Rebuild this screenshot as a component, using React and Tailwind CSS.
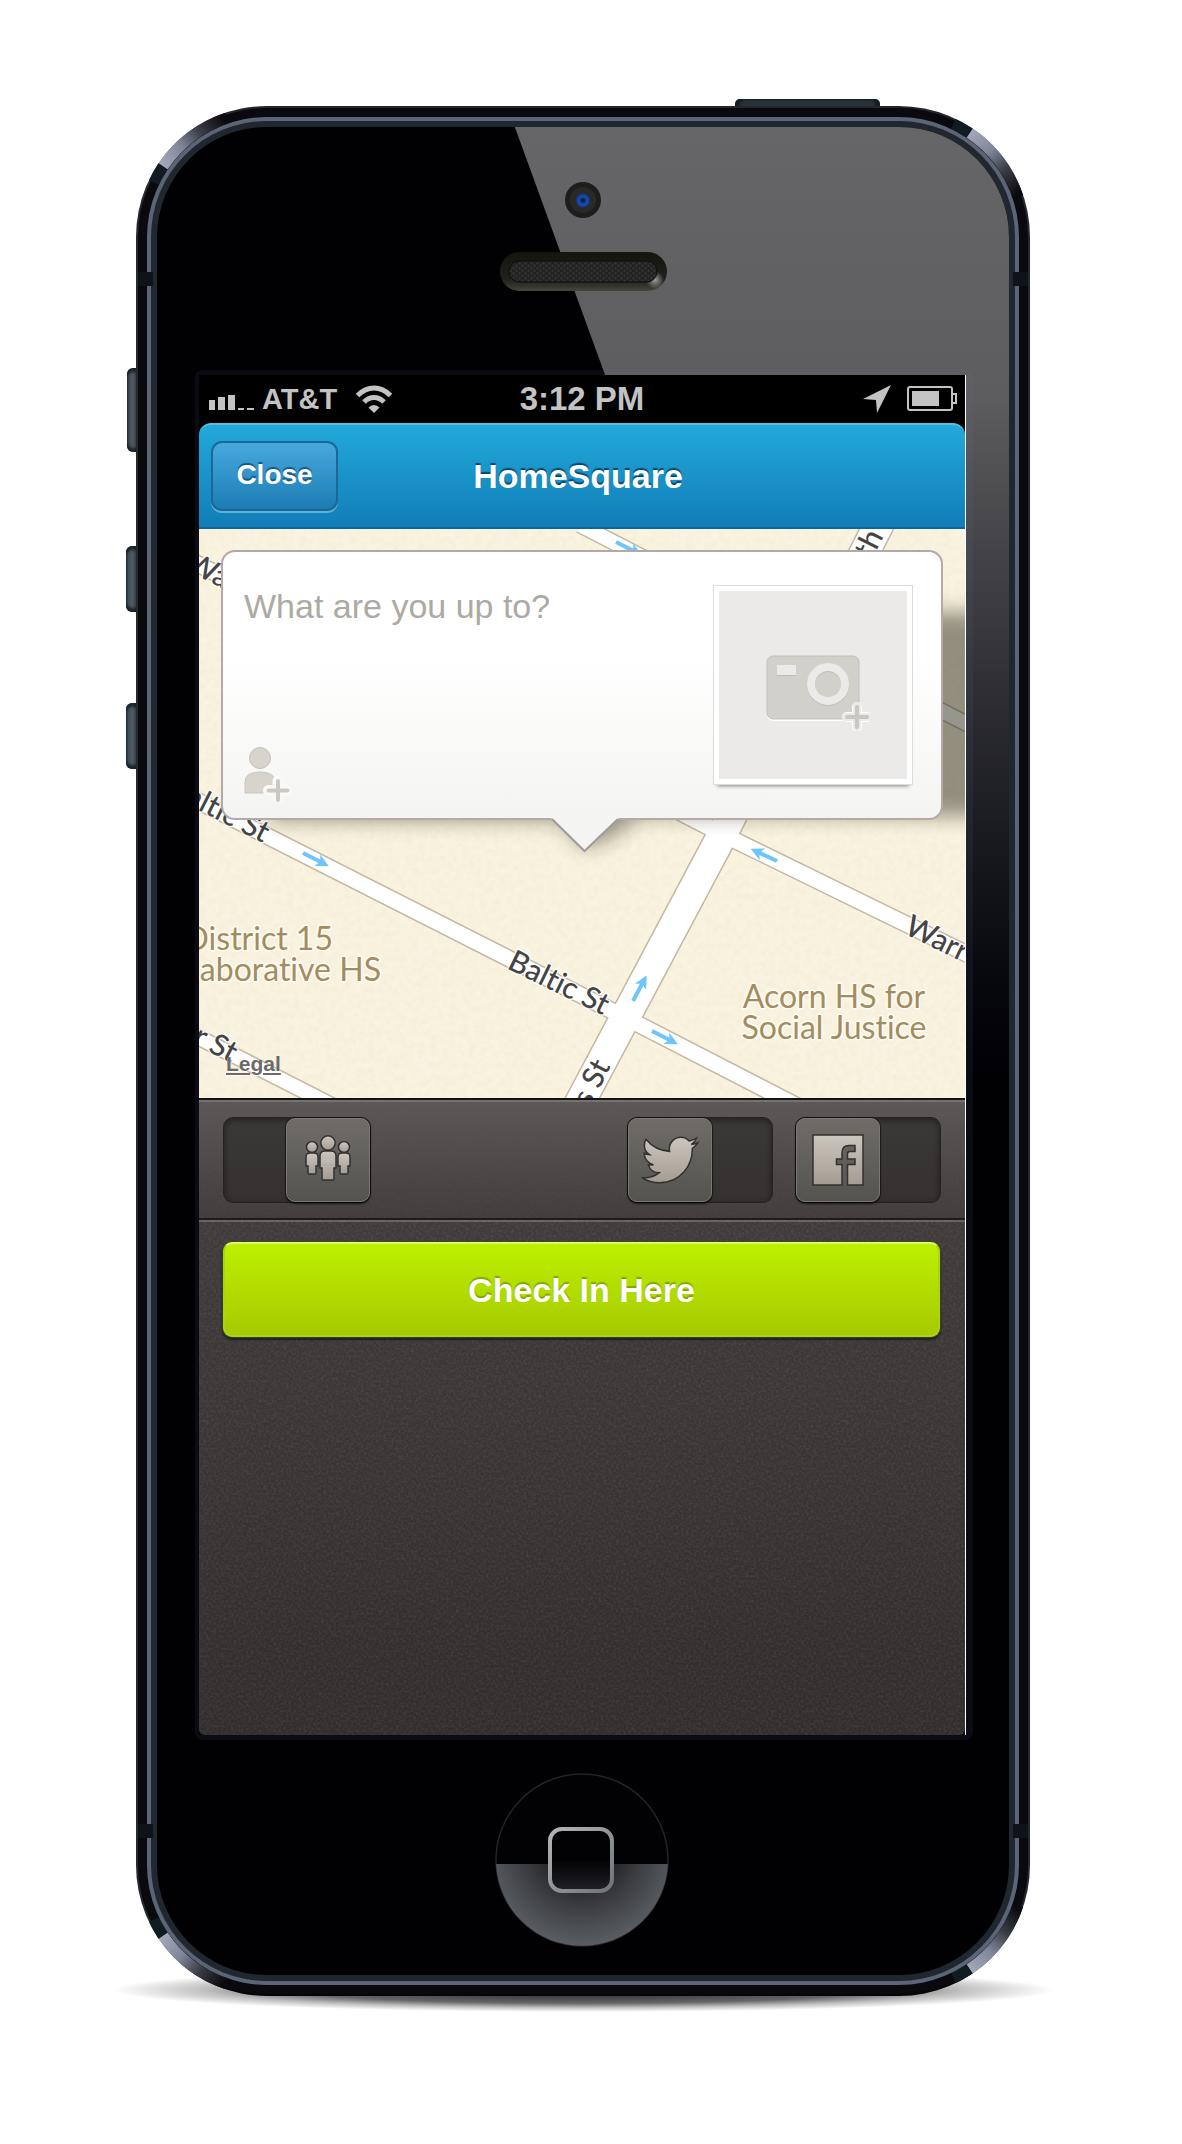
import React from "react";
import { FaTwitter } from "react-icons/fa";

const LABEL = "fill-[#444444] font-['Lato','Noto_Sans',sans-serif] text-[30px] font-medium [font-variant-ligatures:none]";
const PLACE = "fill-[#a38d5c] font-['Lato','Noto_Sans',sans-serif] text-[32px] [font-variant-ligatures:none]";

const ROADS = [
  { d: "M190 560L722 834L906 924L975 958", w: 15 },
  { d: "M190 797L636 1023L805 1110", w: 15 },
  { d: "M580 525L975 728", w: 14 },
  { d: "M190 1033L345 1112", w: 14 },
  { d: "M576 1110L719 841L882 518", w: 29 },
];

const ARROWS = [
  { x: 303, y: 853, a: 27 },
  { x: 777, y: 861, a: 205 },
  { x: 633, y: 1001, a: -62 },
  { x: 652, y: 1031, a: 27 },
  { x: 616, y: 542, a: 27 },
];

function StreetMap() {
  return (
    <svg
      className="absolute inset-0 h-full w-full"
      viewBox="199 529 766 569"
      preserveAspectRatio="xMidYMid slice"
      aria-label="Street map"
    >
      <defs>
        <filter id="paper" x="0" y="0" width="100%" height="100%">
          <feTurbulence type="fractalNoise" baseFrequency="0.16" numOctaves="3" seed="4" />
          <feColorMatrix values="0 0 0 0 0.82  0 0 0 0 0.72  0 0 0 0 0.48  0.45 0 0 0 -0.16" />
        </filter>
        <filter id="soft" x="-20%" y="-40%" width="140%" height="180%">
          <feGaussianBlur stdDeviation="10" />
        </filter>
      </defs>
      <rect x="199" y="529" width="766" height="569" fill="#f9f3e1" />
      <rect x="199" y="529" width="766" height="569" filter="url(#paper)" />
      <g fill="none" stroke="#c3b8a2">
        {ROADS.map((r) => (
          <path key={r.d} d={r.d} strokeWidth={r.w + 3} />
        ))}
      </g>
      <g fill="none" stroke="#ffffff">
        {ROADS.map((r) => (
          <path key={r.d} d={r.d} strokeWidth={r.w} />
        ))}
      </g>
      {ARROWS.map((a) => (
        <g key={`${a.x}-${a.y}`} transform={`translate(${a.x} ${a.y}) rotate(${a.a})`}>
          <path d="M0 0H21" stroke="#6fc4fb" strokeWidth="4" />
          <path d="M29 0L16 -6.5L19.5 0L16 6.5Z" fill="#6fc4fb" />
        </g>
      ))}
      <g stroke="#ffffff" strokeWidth="3" paintOrder="stroke" strokeLinejoin="round" strokeOpacity="0.8">
        <text className={LABEL} transform="translate(184 569) rotate(27)">Warren St</text>
        <text className={LABEL} transform="translate(263 843) rotate(27)" textAnchor="end">Baltic St</text>
        <text className={LABEL} transform="translate(506 968) rotate(26)">Baltic St</text>
        <text className={LABEL} transform="translate(903 933) rotate(26)">Warren St</text>
        <text className={LABEL} transform="translate(231 1063) rotate(27)" textAnchor="end">Butler St</text>
        <text className={LABEL} transform="translate(635 573) rotate(27)">Wyckoff St</text>
        <text className={LABEL} transform="translate(611 1066) rotate(-63)" textAnchor="end">Nevins St</text>
        <text className={LABEL} transform="translate(884 536) rotate(-63)" textAnchor="end">th</text>
        <text className={PLACE} x="333" y="950" textAnchor="end">District 15</text>
        <text className={PLACE} x="381" y="981" textAnchor="end">Collaborative HS</text>
        <text className={PLACE} x="834" y="1008" textAnchor="middle">Acorn HS for</text>
        <text className={PLACE} x="834" y="1039" textAnchor="middle">Social Justice</text>
      </g>
      <path d="M270 612H1000V816H640L610 838L584 848L560 820H270Z" fill="#1e1c10" opacity="0.46" filter="url(#soft)" />
    </svg>
  );
}

function PersonPlus() {
  return (
    <svg width="48" height="56" viewBox="0 0 48 56" aria-hidden="true">
      <circle cx="16" cy="12" r="10.5" fill="#d6d4cd" stroke="#c4c2ba" />
      <path d="M1 47V36Q1 26 16 26Q31 26 31 36V47Z" fill="#d6d4cd" stroke="#c9c7bf" />
      <path d="M34 35V54M24.500 44.500H43.500" stroke="#f9f9f7" strokeWidth="11" strokeLinecap="round" />
      <path d="M34 35V54M24.500 44.500H43.500" stroke="#cbc9c1" strokeWidth="4" strokeLinecap="round" />
    </svg>
  );
}

function CameraPlus() {
  return (
    <svg width="104" height="76" viewBox="0 0 104 76" aria-hidden="true">
      <rect x="1" y="2" width="92" height="64" rx="6" fill="#ffffff" />
      <rect x="1" y="1" width="92" height="63" rx="6" fill="#d1d0ca" stroke="#c2c1ba" />
      <rect x="11" y="10" width="19" height="11" fill="#bdbcb5" />
      <rect x="11" y="10" width="19" height="10" fill="#ebeae8" />
      <circle cx="62" cy="30" r="17" fill="none" stroke="#bfbeb7" strokeWidth="8" />
      <circle cx="62" cy="29" r="17" fill="none" stroke="#ebeae8" strokeWidth="8" />
      <path d="M91 52V72M81 62H101" stroke="#ffffff" strokeWidth="10" strokeLinecap="round" />
      <path d="M91 51V72M80 62H102" stroke="#ebeae8" strokeWidth="8" strokeLinecap="round" />
      <path d="M91 52V72M81 62H101" stroke="#c8c7c0" strokeWidth="4" strokeLinecap="round" />
    </svg>
  );
}

function IconFill() {
  return (
    <defs>
      <linearGradient id="stone" x1="0" y1="0" x2="0" y2="1">
        <stop offset="0" stopColor="#cbc6be" />
        <stop offset="1" stopColor="#a49c92" />
      </linearGradient>
    </defs>
  );
}

function PeopleIcon() {
  const side = "M2 22Q2 18 6 18H10Q14 18 14 22V31H12V38Q12 39 11 39H5Q4 39 4 38V31H2Z";
  return (
    <svg width="50" height="50" viewBox="-1 0 50 50" aria-hidden="true">
      <IconFill />
      <g fill="url(#stone)" stroke="#33312f" strokeWidth="1.500">
        <circle cx="8" cy="12" r="5.500" />
        <path d={side} />
        <circle cx="40" cy="12" r="5.500" />
        <path d={side} transform="translate(32 0)" />
        <circle cx="24" cy="8" r="7.200" />
        <path d="M16 21Q16 16 21 16H27Q32 16 32 21V33H30V44Q30 45 29 45H19Q18 45 18 44V33H16Z" />
      </g>
    </svg>
  );
}

function FacebookSquare() {
  return (
    <svg width="54" height="54" viewBox="-2 -2 54 54" aria-hidden="true">
      <path
        d="M0 0H50V50H34.500V29.500H42V24H34.500V19Q34.500 16.500 37 16.500H42V10.500H36Q29 10.500 29 18V24H23.500V29.500H29V50H0Z"
        fill="url(#stone)"
        stroke="#33312f"
        strokeWidth="1.500"
      />
    </svg>
  );
}

function Toggle({ id, label, right, children }) {
  return (
    <label
      htmlFor={id}
      className={`flex h-[86px] rounded-[10px] border border-[#242221] bg-linear-to-b from-[#3b3937] to-[#343130] shadow-[inset_0_2px_6px_rgba(0,0,0,0.45)] ${right ? "w-[148px] justify-end" : "w-[146px] justify-start"}`}
    >
      <input id={id} type="checkbox" defaultChecked={right} aria-label={label} className="sr-only" />
      <span className="flex h-[84px] w-[84px] items-center justify-center rounded-[9px] border border-[#7b7873] bg-linear-to-b from-[#706d69] to-[#54534e] shadow-[0_2px_2px_rgba(0,0,0,0.6),0_0_1px_1px_rgba(0,0,0,0.45)]">
        {children}
      </span>
    </label>
  );
}

function StatusBar() {
  return (
    <div className="grid h-12 grid-cols-3 items-center bg-black font-['Liberation_Sans',Arial,sans-serif] font-bold text-[#c3c3c3]">
      <div className="flex items-center gap-2 pl-[10px] text-[29px] leading-8">
        <svg width="45" height="26" viewBox="0 0 45 26" fill="#c3c3c3" aria-hidden="true">
          <path d="M0 14H6V24H0ZM9 11H16V24H9ZM19 9H26V24H19ZM29 22H35V24H29ZM38 22H45V24H38Z" />
        </svg>
        <span>AT&amp;T</span>
        <svg className="ml-[10px]" width="38" height="28" viewBox="0 0 38 28" aria-hidden="true">
          <g fill="none" stroke="#c3c3c3" strokeWidth="5">
            <path d="M2.500 10.500Q10 3 19 3T35.500 10.500" />
            <path d="M9 17Q13.500 12.500 19 12.500T29 17" />
          </g>
          <path d="M19 28L13.500 22.500Q16 20 19 20T24.500 22.500Z" fill="#c3c3c3" />
        </svg>
      </div>
      <span className="text-center text-[33px] leading-8">3:12 PM</span>
      <div className="flex items-center justify-end gap-4 pr-2">
        <svg width="28" height="28" viewBox="0 0 28 28" fill="#c3c3c3" aria-hidden="true">
          <path d="M28 0L14 28L13 15L0 14Z" />
        </svg>
        <svg width="50" height="26" viewBox="0 0 50 26" aria-hidden="true">
          <rect x="1" y="1" width="44" height="23" rx="2" fill="none" stroke="#c3c3c3" strokeWidth="2" />
          <path d="M46 8H49V17H46" fill="none" stroke="#c3c3c3" strokeWidth="2" />
          <rect x="5" y="5" width="27" height="15" fill="#c3c3c3" />
        </svg>
      </div>
    </div>
  );
}

function Header() {
  return (
    <div className="bg-black font-['Liberation_Sans',Arial,sans-serif] font-bold text-white">
      <header className="grid h-[106px] grid-cols-[1fr_auto_1fr] items-center rounded-t-[12px] border-t-2 border-b-2 border-t-[#58bfe3] border-b-[#0a64a0] bg-linear-to-b from-[#22a9d9] to-[#127db8] pr-5 pl-3">
        <button
          type="button"
          className="h-[70px] w-[127px] justify-self-start rounded-[11px] border-2 border-[#1c6797] bg-linear-to-b from-[#46a9dc] to-[#1b7db4] pb-[2px] text-[28px] leading-8 shadow-[0_2px_0_rgba(130,195,230,0.7)] [text-shadow:0_-2px_1px_rgba(10,70,110,0.8)]"
        >
          Close
        </button>
        <h1 className="text-[34px] leading-10 [text-shadow:0_-2px_1px_rgba(5,60,90,0.85)]">HomeSquare</h1>
      </header>
    </div>
  );
}

function Composer() {
  return (
    <div className="relative mx-[22px] mt-[21px]">
      <div className="flex h-[270px] justify-between rounded-[14px] border-2 border-[#b5a8a8] bg-linear-to-b from-white from-40% to-[#f4f4f2] pt-[34px] pr-[29px] pl-[21px]">
        <div className="flex min-w-0 flex-1 flex-col">
          <textarea
            aria-label="What are you up to?"
            placeholder="What are you up to?"
            className="h-40 w-full resize-none bg-transparent font-['Liberation_Sans',Arial,sans-serif] text-[34px] leading-10 outline-none placeholder:text-[#abaaa3]"
          />
          <button type="button" aria-label="Tag a friend" className="self-start">
            <PersonPlus />
          </button>
        </div>
        <button
          type="button"
          aria-label="Add a photo"
          className="flex h-[198px] w-[198px] items-center justify-center border-[5px] border-white bg-[#ebeae8] pt-4 pl-[10px] shadow-[0_0_0_1px_#dddcd9,0_5px_4px_-3px_rgba(0,0,0,0.45)]"
        >
          <CameraPlus />
        </button>
      </div>
      <svg
        className="absolute top-[268px] left-[330px]"
        width="68"
        height="36"
        viewBox="0 0 68 36"
        aria-hidden="true"
      >
        <path d="M0 0H68L34 33Z" fill="#f4f4f2" />
        <path d="M1 1L33.500 33L67 1" fill="none" stroke="#a59a9a" strokeWidth="2" />
      </svg>
    </div>
  );
}

function Grain() {
  return (
    <svg className="pointer-events-none absolute inset-0 h-full w-full" aria-hidden="true">
      <filter id="grain" x="0" y="0" width="100%" height="100%">
        <feTurbulence type="fractalNoise" baseFrequency="0.4" numOctaves="2" seed="7" />
        <feColorMatrix values="0 0 0 0 1  0 0 0 0 0.95  0 0 0 0 0.9  0.16 0 0 0 -0.06" />
      </filter>
      <rect width="100%" height="100%" filter="url(#grain)" />
    </svg>
  );
}

function Screen() {
  return (
    <div className="flex flex-col border-r border-white bg-black">
      <StatusBar />
      <Header />
      <section className="relative h-[569px] overflow-hidden">
        <StreetMap />
        <Composer />
        <a
          href="#legal"
          className="absolute bottom-[22px] left-[27px] font-['Liberation_Sans',Arial,sans-serif] text-[21px] leading-6 font-bold text-[#6b6a66] underline underline-offset-2 [text-shadow:0_1px_1px_white]"
        >
          Legal
        </a>
      </section>
      <div className="relative rounded-b-[6px] bg-linear-to-b from-[#443f3f] to-[#312d2c]">
        <Grain />
        <div className="relative flex h-[122px] items-start border-t-2 border-b-2 border-t-[#141313] border-b-[#1d1b1b] bg-linear-to-b from-[#5f5b5a]/90 to-[#433d3d]/70 px-6 pt-[17px] shadow-[inset_0_2px_0_rgba(255,255,255,0.16),0_2px_0_rgba(255,255,255,0.2)]">
          <div className="flex-1">
            <Toggle id="friends" label="Share with friends" right>
              <PeopleIcon />
            </Toggle>
          </div>
          <div className="flex gap-[22px]">
            <Toggle id="twitter" label="Share on Twitter">
              <FaTwitter className="h-14 w-14 overflow-visible fill-[url(#stone)] stroke-[#33312f] [stroke-width:14px]" aria-hidden="true" />
            </Toggle>
            <Toggle id="facebook" label="Share on Facebook">
              <FacebookSquare />
            </Toggle>
          </div>
        </div>
        <div className="relative h-[515px] pt-[22px] pr-[25px] pl-6">
          <button
            type="button"
            className="h-[95px] w-full rounded-[9px] border-2 border-[#a9d31a] border-t-[#dcf57a] bg-linear-to-b from-[#bdf000] to-[#a7ca00] font-['Liberation_Sans',Arial,sans-serif] text-[34px] leading-10 font-bold text-white shadow-[0_0_0_1px_rgba(70,90,0,0.6),0_2px_2px_1px_rgba(0,0,0,0.5)] [text-shadow:0_-2px_1px_rgba(90,120,0,0.55)]"
          >
            Check In Here
          </button>
        </div>
      </div>
    </div>
  );
}

function Shine({ className }) {
  return (
    <svg className={`absolute ${className}`} width="131" height="131" viewBox="0 0 131 131" aria-hidden="true">
      <defs>
        <linearGradient id="shine" gradientUnits="userSpaceOnUse" x1="26" y1="60" x2="88" y2="12">
          <stop offset="0" stopColor="#a3a9ba" />
          <stop offset="0.35" stopColor="#80869a" />
          <stop offset="0.65" stopColor="#3a3d47" />
          <stop offset="1" stopColor="#0a090d" />
        </linearGradient>
      </defs>
      <path d="M27 60.400A125.500 125.500 0 0 1 91 12" fill="none" stroke="url(#shine)" strokeWidth="11" />
      <path d="M18 76.500A125.500 125.500 0 0 1 27 60.400" fill="none" stroke="#111b22" strokeWidth="11" />
    </svg>
  );
}

function SideButton({ className }) {
  return (
    <span
      className={`absolute rounded-l-[6px] bg-linear-to-r from-[#3c4852] via-[#4f5b64] to-[#1d272e] shadow-[inset_0_4px_3px_rgba(10,15,20,0.7),inset_0_-4px_3px_rgba(10,15,20,0.7)] ${className}`}
    />
  );
}

function Notch({ className }) {
  return <span className={`absolute h-[14px] w-[15px] bg-[#0d1319] ${className}`} />;
}

function HomeButton() {
  return (
    <button type="button" aria-label="Home" className="rounded-full">
      <svg width="174" height="174" viewBox="0 0 174 174" aria-hidden="true">
        <defs>
          <radialGradient id="pool" gradientUnits="userSpaceOnUse" cx="87" cy="74" r="100">
            <stop offset="0.2" stopColor="#17171b" />
            <stop offset="0.6" stopColor="#3b3d41" />
            <stop offset="1" stopColor="#5b5f64" />
          </radialGradient>
          <linearGradient id="rim" x1="0" y1="0" x2="1" y2="1">
            <stop offset="0" stopColor="#b5b5ba" />
            <stop offset="1" stopColor="#6c7377" />
          </linearGradient>
          <linearGradient id="well" x1="0" y1="0" x2="0" y2="1">
            <stop offset="0.5" stopColor="#020205" />
            <stop offset="1" stopColor="#222226" />
          </linearGradient>
        </defs>
        <circle cx="87" cy="87" r="86" fill="#020205" stroke="#242426" strokeWidth="1.500" />
        <path d="M1.100 91H172.900A86 86 0 0 1 1.100 91Z" fill="url(#pool)" />
        <rect x="55" y="56" width="62" height="62" rx="12" fill="url(#well)" stroke="url(#rim)" strokeWidth="4" />
      </svg>
    </button>
  );
}

function Speaker() {
  return (
    <svg width="167" height="40" viewBox="0 0 167 40" aria-hidden="true">
      <defs>
        <pattern id="mesh" width="6" height="5" patternUnits="userSpaceOnUse">
          <rect width="6" height="5" fill="#222222" />
          <circle cx="1.500" cy="1.200" r="1.200" fill="#333333" />
          <circle cx="4.500" cy="3.700" r="1.200" fill="#333333" />
        </pattern>
        <linearGradient id="lip" x1="0" y1="0" x2="0" y2="1">
          <stop offset="0" stopColor="#141411" />
          <stop offset="0.7" stopColor="#20201d" />
          <stop offset="1" stopColor="#454441" />
        </linearGradient>
        <radialGradient id="glint">
          <stop offset="0" stopColor="#999999" />
          <stop offset="1" stopColor="#999999" stopOpacity="0" />
        </radialGradient>
      </defs>
      <rect width="167" height="39" rx="19.500" fill="url(#lip)" />
      <circle cx="155" cy="28" r="9" fill="url(#glint)" />
      <rect x="9" y="9" width="148" height="21" rx="10.500" fill="url(#mesh)" stroke="#0c0c0c" />
    </svg>
  );
}

function Lens() {
  return (
    <svg width="36" height="36" viewBox="0 0 36 36" aria-hidden="true">
      <defs>
        <radialGradient id="iris">
          <stop offset="0" stopColor="#03102a" />
          <stop offset="0.6" stopColor="#174fae" />
          <stop offset="1" stopColor="#0d3580" />
        </radialGradient>
      </defs>
      <circle cx="18" cy="18" r="18" fill="#1d1d1c" />
      <circle cx="18" cy="18" r="13" fill="#292928" />
      <circle cx="18" cy="18.500" r="7" fill="url(#iris)" />
    </svg>
  );
}

export default function App() {
  return (
    <main className="min-h-screen overflow-hidden bg-white pt-[106px] pr-[152px] pb-[148px] pl-[136px]">
      <div className="relative w-full max-w-[894px]">
        <div className="absolute -inset-x-6 -bottom-4 h-11 bg-[radial-gradient(closest-side,rgba(0,0,0,0.9),rgba(0,0,0,0.6)_60%,rgba(0,0,0,0.25)_80%,transparent)]" />
        <SideButton className="top-[262px] -left-[9px] h-[84px] w-[12px]" />
        <SideButton className="top-[440px] -left-[10px] h-[66px] w-[13px]" />
        <SideButton className="top-[597px] -left-[10px] h-[66px] w-[13px]" />
        <span className="absolute -top-[7px] right-[150px] h-[10px] w-[145px] rounded-t-[5px] bg-[#27323b] shadow-[inset_5px_0_3px_rgba(10,15,20,0.6),inset_-5px_0_3px_rgba(10,15,20,0.6)]" />
        <div className="relative rounded-[131px] border-2 border-t-[#25262b] border-r-[#222a30] border-b-[#050506] border-l-[#252a2f] bg-[#0a090d] p-[9px]">
          <Shine className="-top-[2px] -left-[2px]" />
          <Shine className="-top-[2px] -right-[2px] rotate-90" />
          <Shine className="-bottom-[2px] -left-[2px] -scale-y-100" />
          <Shine className="-right-[2px] -bottom-[2px] rotate-90 -scale-x-100" />
          <div className="relative rounded-[120px] bg-[#5c6477] p-1">
            <div className="rounded-[116px] bg-[#20272e] p-[6px]">
              <div className="relative flex flex-col items-stretch overflow-hidden rounded-[110px] bg-[#010104]">
                <div className="absolute inset-x-0 top-0 h-[960px] bg-linear-to-b from-[#666668] from-0% via-[#5d5d5f] via-28% to-[#010104] [clip-path:polygon(42%_0,100%_0,100%_100%,83%_100%)]" />
                <div className="relative flex h-[243px] flex-col items-center pt-[55px]">
                  <Lens />
                  <div className="mt-[34px]">
                    <Speaker />
                  </div>
                </div>
                <div className="relative mr-[36px] ml-[38px] rounded-[8px] bg-[#6a70a0]/10 pt-[5px] pr-[7px] pb-[5px] pl-1">
                  <Screen />
                </div>
                <div className="flex h-[235px] items-start justify-center pt-[33px] pr-[3px]">
                  <HomeButton />
                </div>
              </div>
            </div>
          </div>
          <Notch className="top-[164px] left-0" />
          <Notch className="top-[164px] right-0" />
          <Notch className="bottom-[156px] left-0" />
          <Notch className="right-0 bottom-[156px]" />
        </div>
      </div>
    </main>
  );
}
